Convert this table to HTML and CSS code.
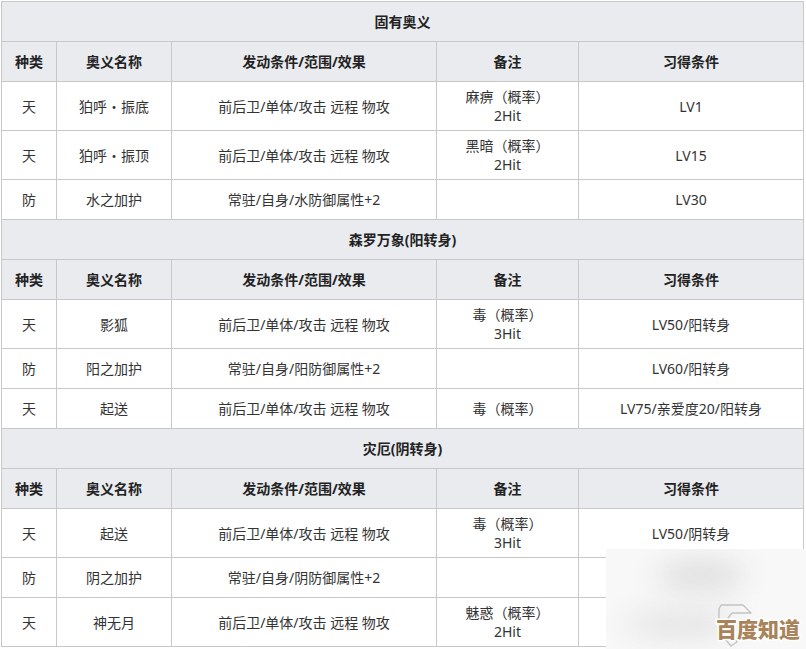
FILE: index.html
```html
<!DOCTYPE html>
<html lang="zh-CN">
<head>
<meta charset="utf-8">
<title>奥义</title>
<link rel="stylesheet" href="styles.css">
</head>
<body>
<table class="skills">
  <colgroup>
    <col class="c-type">
    <col class="c-name">
    <col class="c-cond">
    <col class="c-note">
    <col class="c-learn">
  </colgroup>
  <tbody>
    <tr class="title"><th colspan="5">固有奥义</th></tr>
    <tr class="head"><th>种类</th><th>奥义名称</th><th>发动条件/范围/效果</th><th>备注</th><th>习得条件</th></tr>
    <tr class="two"><td>天</td><td>狛呼・振底</td><td>前后卫/单体/攻击 远程 物攻</td><td>麻痹（概率）<br>2Hit</td><td>LV1</td></tr>
    <tr class="two"><td>天</td><td>狛呼・振顶</td><td>前后卫/单体/攻击 远程 物攻</td><td>黑暗（概率）<br>2Hit</td><td>LV15</td></tr>
    <tr><td>防</td><td>水之加护</td><td>常驻/自身/水防御属性+2</td><td></td><td>LV30</td></tr>

    <tr class="title"><th colspan="5">森罗万象(阳转身)</th></tr>
    <tr class="head"><th>种类</th><th>奥义名称</th><th>发动条件/范围/效果</th><th>备注</th><th>习得条件</th></tr>
    <tr class="two"><td>天</td><td>影狐</td><td>前后卫/单体/攻击 远程 物攻</td><td>毒（概率）<br>3Hit</td><td>LV50/阳转身</td></tr>
    <tr><td>防</td><td>阳之加护</td><td>常驻/自身/阳防御属性+2</td><td></td><td>LV60/阳转身</td></tr>
    <tr><td>天</td><td>起送</td><td>前后卫/单体/攻击 远程 物攻</td><td>毒（概率）</td><td>LV75/亲爱度20/阳转身</td></tr>

    <tr class="title"><th colspan="5">灾厄(阴转身)</th></tr>
    <tr class="head"><th>种类</th><th>奥义名称</th><th>发动条件/范围/效果</th><th>备注</th><th>习得条件</th></tr>
    <tr class="two"><td>天</td><td>起送</td><td>前后卫/单体/攻击 远程 物攻</td><td>毒（概率）<br>3Hit</td><td>LV50/阴转身</td></tr>
    <tr><td>防</td><td>阴之加护</td><td>常驻/自身/阴防御属性+2</td><td></td><td></td></tr>
    <tr class="two"><td>天</td><td>神无月</td><td>前后卫/单体/攻击 远程 物攻</td><td>魅惑（概率）<br>2Hit</td><td></td></tr>
  </tbody>
</table>

<div class="watermark">
  <div class="blob blob-a"></div>
  <div class="blob blob-b"></div>
  <svg class="wm-logo" width="42" height="46" viewBox="0 0 42 46">
    <path d="M6 4 L28 4 L36 12 L17 12 L13 17 L13 30 L22 41 L16 45 L4 31 L4 8 Z" fill="none" stroke="#c4c4c4" stroke-width="1.4" stroke-linejoin="round"/>
  </svg>
  <span class="wm-text">百度知道</span>
</div>
</body>
</html>
```
FILE: styles.css
```css
html, body {
  margin: 0;
  padding: 0;
  background: #ffffff;
}

body {
  position: relative;
  width: 806px;
  height: 649px;
  overflow: hidden;
  font-family: "Noto Sans", "Noto Sans CJK SC", "Liberation Sans", sans-serif;
  font-size: 14px;
  color: #333333;
}

.skills {
  margin: 1px 0 0 1px;
  width: 803px;
  table-layout: fixed;
  border-collapse: collapse;
}

.c-type { width: 55px; }
.c-name { width: 115px; }
.c-cond { width: 265px; }
.c-note { width: 142px; }
.c-learn { width: 225px; }

.skills th,
.skills td {
  border: 1px solid #c8c8c8;
  padding: 5px 4px;
  height: 29px;
  line-height: 19px;
  text-align: center;
  vertical-align: middle;
  box-sizing: border-box;
}

.skills th {
  background: #e9ebef;
  color: #222222;
  font-weight: bold;
}

.skills tr { height: 40px; }
.skills tr.two { height: 49px; }

.watermark {
  position: absolute;
  left: 606px;
  top: 549px;
  width: 200px;
  height: 100px;
  background: #f8f8f8;
  overflow: hidden;
}

.blob {
  position: absolute;
  border-radius: 50%;
  background: #dcdcdc;
  filter: blur(14px);
}

.blob-a {
  left: 50px;
  top: 12px;
  width: 90px;
  height: 28px;
}

.blob-b {
  left: 20px;
  top: 62px;
  width: 110px;
  height: 26px;
  background: #e2e2e2;
}

.wm-logo {
  position: absolute;
  left: 109px;
  top: 52px;
}

.wm-text {
  position: absolute;
  left: 110px;
  top: 66px;
  font-family: "Noto Sans CJK SC", sans-serif;
  font-weight: 900;
  font-size: 21px;
  line-height: 26px;
  color: #a9845a;
  -webkit-text-stroke: 3px #ffffff;
  paint-order: stroke fill;
}
```
